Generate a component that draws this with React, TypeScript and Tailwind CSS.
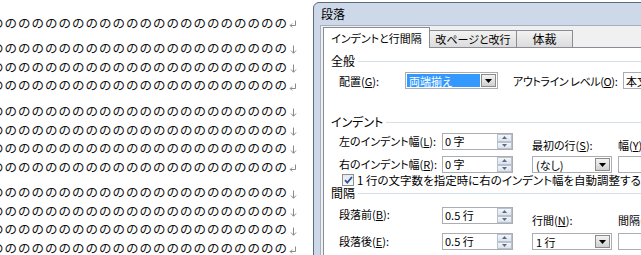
import type { ReactNode } from "react";

const NO = "の".repeat(22);

// each paragraph: list of line endings, "br" = manual line break, "p" = paragraph mark
const paragraphs: ("br" | "p")[][] = [
  ["p"],
  ["br", "br", "p"],
  ["br", "br", "br", "p"],
  ["br", "br", "br", "p"],
];

function LineBreakMark() {
  return (
    <svg width="7" height="9" viewBox="0 0 7 9" className="ml-[2px] mt-[3px] shrink-0" aria-hidden>
      <path d="M3.5 0.5v7.5M1 5.5l2.5 2.8 2.5-2.8" fill="none" stroke="#8a8a8a" strokeWidth="1" />
    </svg>
  );
}

function ParaMark() {
  return (
    <svg width="8" height="8" viewBox="0 0 8 8" className="ml-[1px] mt-[3px] shrink-0" aria-hidden>
      <path d="M6.5 0.5v5H1.2M3.2 3.5l-2 2 2 2" fill="none" stroke="#8a8a8a" strokeWidth="1" />
    </svg>
  );
}

function Document() {
  return (
    <div className="w-[313px] shrink-0 overflow-hidden bg-white pt-[13.5px] font-['Noto_Sans_CJK_JP',sans-serif]">
      {paragraphs.map((p, i) => (
        <div key={i} className="mb-[7px]">
          {p.map((m, j) => (
            <div
              key={j}
              className="-ml-[9px] flex h-[18.6px] items-center whitespace-nowrap text-[12.5px] leading-none tracking-[1px] text-[#111]"
            >
              <span>{NO}</span>
              {m === "br" ? <LineBreakMark /> : <ParaMark />}
            </div>
          ))}
        </div>
      ))}
    </div>
  );
}

function U({ children }: { children: ReactNode }) {
  return <span className="underline underline-offset-[1px]">{children}</span>;
}

function GroupHeader({ label, className = "" }: { label: string; className?: string }) {
  return (
    <div className={`flex h-[14px] items-center ${className}`}>
      <span className="text-[12px]">{label}</span>
      <div className="ml-[3px] h-px flex-1 bg-[#d5dfe5]" />
    </div>
  );
}

function DropButton() {
  return (
    <div className="my-[1px] mr-[1px] flex w-[15px] shrink-0 items-center justify-center border border-[#8b8b8b] bg-gradient-to-b from-[#f3f3f3] to-[#d0d0d0]">
      <svg width="7" height="4" viewBox="0 0 7 4" aria-hidden>
        <path d="M0 0h7L3.5 4z" fill="#000" />
      </svg>
    </div>
  );
}

function Combo({ text, w, selected = false }: { text: string; w: string; selected?: boolean }) {
  return (
    <div className={`flex h-[17px] shrink-0 border border-[#abadb3] bg-white ${w}`}>
      <div className="flex min-w-0 flex-1 items-center p-[1px]">
        <span
          className={
            selected
              ? "flex h-full flex-1 items-center bg-[#3399ff] pl-[2px] text-white"
              : "pl-[2px]"
          }
        >
          {text}
        </span>
      </div>
      <DropButton />
    </div>
  );
}

function SpinArrow({ up }: { up?: boolean }) {
  return (
    <div className="flex flex-1 items-center justify-center border border-[#b7c1cf] bg-gradient-to-b from-[#f4f6f9] to-[#dde3ec]">
      <svg width="5" height="3" viewBox="0 0 5 3" aria-hidden>
        <path d={up ? "M0 3h5L2.5 0z" : "M0 0h5L2.5 3z"} fill="#5b6b86" />
      </svg>
    </div>
  );
}

function Spin({ value }: { value: string }) {
  return (
    <div className="flex h-[17px] w-[71px] shrink-0 border border-[#abadb3] bg-white">
      <span className="flex-1 pl-[2px] leading-[15px]">{value}</span>
      <div className="flex w-[15px] flex-col">
        <SpinArrow up />
        <SpinArrow />
      </div>
    </div>
  );
}

function TextBox() {
  return <div className="h-[17px] w-[80px] shrink-0 border border-[#abadb3] bg-white" />;
}

function CheckBox() {
  return (
    <div className="flex h-[12px] w-[12px] shrink-0 items-center justify-center border border-[#8e8f8f] bg-gradient-to-b from-[#e6e9ee] to-[#f8f9fa]">
      <svg width="9" height="8" viewBox="0 0 9 8" aria-hidden>
        <path d="M1 4.2l2.3 2.4L8 1" fill="none" stroke="#31539a" strokeWidth="1.8" />
      </svg>
    </div>
  );
}

function Tabs() {
  return (
    <div className="flex h-[20px] items-end">
      <div className="relative z-10 -mb-px flex h-[21px] w-[107px] shrink-0 items-center justify-center border border-b-0 border-[#898c95] bg-white">
        インデントと行間隔
      </div>
      <div className="-ml-px flex h-[17px] w-[88px] shrink-0 items-center justify-center border border-b-0 border-[#898c95] bg-gradient-to-b from-[#f2f2f2] to-[#dcdcdc]">
        改ページと改行
      </div>
      <div className="-ml-px flex h-[17px] w-[57px] shrink-0 items-center justify-center border border-b-0 border-[#898c95] bg-gradient-to-b from-[#f2f2f2] to-[#dcdcdc] text-[12px]">
        体裁
      </div>
    </div>
  );
}

function TabPage() {
  return (
    <div className="h-[230px] border border-[#898c95] bg-white pl-[7px] pt-[6px]">
      <GroupHeader label="全般" />

      <div className="mt-[4px] flex h-[17px] items-center pl-[8px]">
        <span className="w-[66px] shrink-0">
          配置(<U>G</U>):
        </span>
        <Combo text="両端揃え" w="w-[93px]" selected />
        <span className="ml-[15px] w-[110px] shrink-0 whitespace-nowrap tracking-[-0.4px]">
          アウトライン レベル(<U>O</U>):
        </span>
        <div className="flex h-[17px] w-[80px] shrink-0 items-center border border-[#abadb3] bg-white pl-[2px]">
          本文
        </div>
      </div>

      <GroupHeader label="インデント" className="mt-[26px]" />

      <div className="mt-[4px] flex h-[17px] items-start pl-[8px]">
        <span className="w-[103px] shrink-0 whitespace-nowrap pt-[1px]">
          左のインデント幅(<U>L</U>):
        </span>
        <Spin value="0 字" />
        <span className="ml-[19px] w-[86px] shrink-0 whitespace-nowrap pt-[5px]">
          最初の行(<U>S</U>):
        </span>
        <span className="shrink-0 whitespace-nowrap pt-[5px]">
          幅(<U>Y</U>):
        </span>
      </div>

      <div className="mt-[6px] flex h-[17px] items-start pl-[8px]">
        <span className="w-[103px] shrink-0 whitespace-nowrap pt-[1px]">
          右のインデント幅(<U>R</U>):
        </span>
        <Spin value="0 字" />
        <div className="ml-[19px] w-[86px] shrink-0">
          <Combo text="(なし)" w="w-[80px]" />
        </div>
        <TextBox />
      </div>

      <div className="mt-[1px] flex h-[12px] items-center pl-[11px]">
        <CheckBox />
        <span className="ml-[3px] whitespace-nowrap text-[11.5px]">
          1 行の文字数を指定時に右のインデント幅を自動調整する(<U>D</U>)
        </span>
      </div>

      <GroupHeader label="間隔" />

      <div className="mt-[7px] flex h-[17px] items-start pl-[8px]">
        <span className="w-[103px] shrink-0 whitespace-nowrap">
          段落前(<U>B</U>):
        </span>
        <Spin value="0.5 行" />
        <span className="ml-[19px] w-[86px] shrink-0 whitespace-nowrap pt-[6px]">
          行間(<U>N</U>):
        </span>
        <span className="shrink-0 whitespace-nowrap pt-[6px]">
          間隔(<U>A</U>):
        </span>
      </div>

      <div className="mt-[9px] flex h-[17px] items-start pl-[8px]">
        <span className="w-[103px] shrink-0 whitespace-nowrap pt-[1px]">
          段落後(<U>E</U>):
        </span>
        <Spin value="0.5 行" />
        <div className="ml-[19px] w-[86px] shrink-0">
          <Combo text="1 行" w="w-[80px]" />
        </div>
        <TextBox />
      </div>
    </div>
  );
}

function Dialog() {
  return (
    <div className="min-w-0 flex-1 overflow-hidden pt-[2px]">
      <div className="h-[300px] w-[460px] rounded-tl-[6px] border border-[#5d6b80] bg-[#cdd9e8] font-['Noto_Sans_CJK_JP',sans-serif] text-[11px] leading-[14px] text-black [font-feature-settings:'palt']">
        <div className="flex h-[22px] items-center pl-[7px] text-[12px]">段落</div>
        <div className="ml-[6px] h-full border-l border-t border-[#a3b0c2] bg-[#f0f0f0] pl-[2px] pt-[1px]">
          <Tabs />
          <TabPage />
        </div>
      </div>
    </div>
  );
}

export default function App() {
  return (
    <div className="flex h-[255px] w-[641px] overflow-hidden bg-white">
      <Document />
      <Dialog />
    </div>
  );
}
